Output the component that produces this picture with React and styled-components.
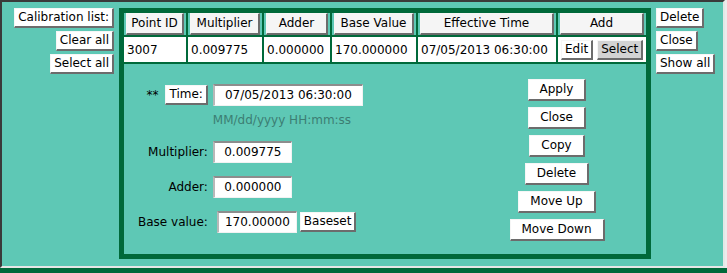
import React from "react";
import styled, { createGlobalStyle } from "styled-components";

const Global = createGlobalStyle`
  html, body { margin: 0; padding: 0; background: #ececec; }
  body { font-family: "DejaVu Sans", Verdana, sans-serif; font-size: 12px; color: #000; }
  #root { width: 727px; }
`;

const TEAL = "#5ec8b5";
const GREEN = "#00693a";

const Frame = styled.div`
  box-sizing: border-box;
  width: 725px;
  height: 268px;
  background: ${TEAL};
  border: 2px solid;
  border-color: #3a3a3a #e6e6e6 #e6e6e6 #3a3a3a;
  padding-top: 6px;
  display: flex;
  align-items: flex-start;
`;

const Strip = styled.div`
  width: 727px;
  height: 5px;
  background: ${GREEN};
`;

const SideColumn = styled.div`
  display: flex;
  flex-direction: column;
  gap: 3px;
  align-items: ${(p) => (p.$right ? "flex-start" : "flex-end")};
  width: ${(p) => (p.$right ? "auto" : "112px")};
  margin: ${(p) => (p.$right ? "0 0 0 5px" : "0 5px 0 0")};
`;

const Btn = styled.button`
  box-sizing: border-box;
  font-family: "DejaVu Sans", Verdana, sans-serif;
  font-size: 12px;
  line-height: 15px;
  color: #000;
  margin: 0;
  height: ${(p) => (p.$big || p.$head ? "22px" : "20px")};
  background: ${(p) => (p.$pressed ? "#d3d3d3" : p.$head ? "#f5f5f5" : "#fff")};
  border-style: solid;
  border-width: 1px 2px 2px 1px;
  border-color: #f6f6f6 #6c6c6c #6c6c6c #f6f6f6;
  padding: ${(p) => (p.$big ? "0 11px" : p.$head ? "0 4px" : "0 3px")};
  width: ${(p) => (p.$head ? "100%" : "auto")};
  white-space: nowrap;
  cursor: pointer;
`;

const Grid = styled.table`
  border-collapse: separate;
  border-spacing: 2px;
  border: 3px solid ${GREEN};
  background: ${GREEN};
  table-layout: fixed;
  width: 532px;
  flex: none;
`;

const HeadCell = styled.td`
  background: ${TEAL};
  padding: 0 2px;
  height: 22px;
`;

const DataCell = styled.td`
  background: #fff;
  padding: 0 3px;
  height: 25px;
  white-space: nowrap;
  font-size: 12px;
`;

const ActionCell = styled(DataCell)`
  padding: 0 3px;
`;

const ActionRow = styled.div`
  display: flex;
  gap: 4px;
  align-items: center;
`;

const FormCell = styled.td`
  background: ${TEAL};
  padding: 0;
  height: 190px;
`;

const FormBody = styled.div`
  display: flex;
  align-items: center;
  justify-content: space-between;
  padding: 0 41px 0 14px;
  height: 190px;
`;

const Fields = styled.div`
  display: grid;
  grid-template-columns: auto auto;
  column-gap: 5px;
  row-gap: 13px;
  align-items: center;
  margin-top: -2px;
`;

const Label = styled.div`
  justify-self: end;
  display: flex;
  align-items: center;
  gap: 7px;
  white-space: nowrap;
`;

const Field = styled.div`
  display: flex;
  align-items: center;
  gap: 3px;
  margin-left: ${(p) => p.$shift || 0}px;
`;

const Input = styled.input`
  box-sizing: border-box;
  width: ${(p) => p.$w}px;
  height: 22px;
  font-family: "DejaVu Sans", Verdana, sans-serif;
  font-size: 12px;
  color: #000;
  text-align: center;
  background: #fff;
  border-style: solid;
  border-width: 2px 1px 1px 2px;
  border-color: #8d8d8d #f2f2f2 #f2f2f2 #b8b8b8;
  padding: 0 4px;
  outline: none;
`;

const Hint = styled.div`
  grid-column: 2;
  color: #3c7e73;
  margin-top: -6px;
  line-height: 15px;
`;

const Actions = styled.div`
  display: flex;
  flex-direction: column;
  align-items: center;
  gap: 6px;
  width: 96px;
  margin-top: 2px;
`;

const cols = [62, 74, 66, 84, 138, 88];
const headers = ["Point ID", "Multiplier", "Adder", "Base Value", "Effective Time", "Add"];
const row = ["3007", "0.009775", "0.000000", "170.000000", "07/05/2013 06:30:00"];

export default function App() {
  return (
    <>
      <Global />
      <Frame>
        <SideColumn>
          <Btn>Calibration list:</Btn>
          <Btn>Clear all</Btn>
          <Btn>Select all</Btn>
        </SideColumn>
        <Grid>
          <colgroup>
            {cols.map((w, i) => (
              <col key={i} style={{ width: w }} />
            ))}
          </colgroup>
          <tbody>
            <tr>
              {headers.map((h) => (
                <HeadCell key={h}>
                  <Btn $head>{h}</Btn>
                </HeadCell>
              ))}
            </tr>
            <tr>
              {row.map((v, i) => (
                <DataCell key={i}>{v}</DataCell>
              ))}
              <ActionCell>
                <ActionRow>
                  <Btn>Edit</Btn>
                  <Btn $pressed>Select</Btn>
                </ActionRow>
              </ActionCell>
            </tr>
            <tr>
              <FormCell colSpan={6}>
                <FormBody>
                  <Fields>
                    <Label>
                      <span>**</span>
                      <Btn>Time:</Btn>
                    </Label>
                    <Field>
                      <Input $w={150} defaultValue="07/05/2013 06:30:00" />
                    </Field>
                    <Hint>MM/dd/yyyy HH:mm:ss</Hint>
                    <Label>Multiplier:</Label>
                    <Field>
                      <Input $w={79} defaultValue="0.009775" />
                    </Field>
                    <Label>Adder:</Label>
                    <Field>
                      <Input $w={79} defaultValue="0.000000" />
                    </Field>
                    <Label>Base value:</Label>
                    <Field $shift={4}>
                      <Input $w={80} defaultValue="170.00000" />
                      <Btn>Baseset</Btn>
                    </Field>
                  </Fields>
                  <Actions>
                    <Btn $big>Apply</Btn>
                    <Btn $big>Close</Btn>
                    <Btn $big>Copy</Btn>
                    <Btn $big>Delete</Btn>
                    <Btn $big>Move Up</Btn>
                    <Btn $big>Move Down</Btn>
                  </Actions>
                </FormBody>
              </FormCell>
            </tr>
          </tbody>
        </Grid>
        <SideColumn $right>
          <Btn>Delete</Btn>
          <Btn>Close</Btn>
          <Btn>Show all</Btn>
        </SideColumn>
      </Frame>
      <Strip />
    </>
  );
}
